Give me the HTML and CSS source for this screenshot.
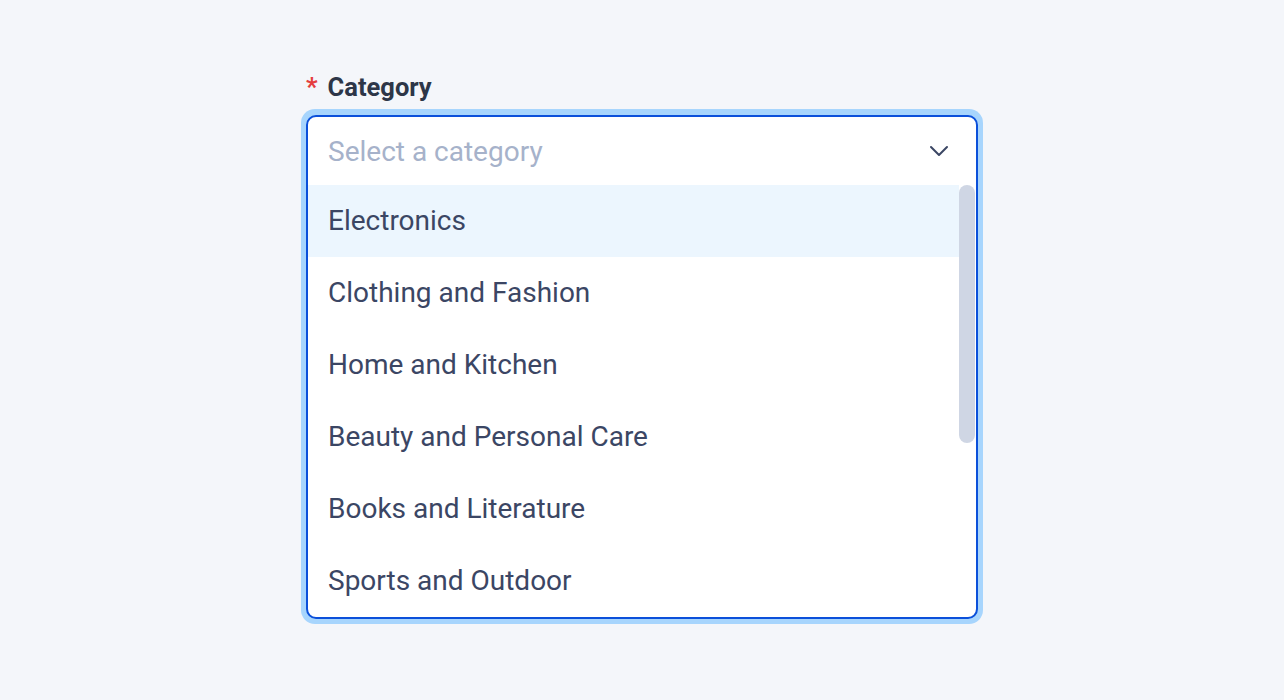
FILE: index.html
```html
<!DOCTYPE html>
<html>
<head>
<meta charset="utf-8">
<link rel="stylesheet" href="styles.css">
</head>
<body>
<div class="page">
  <div class="field">
    <label class="label"><span class="req">*</span>Category</label>
    <div class="ring">
      <div class="select">
        <div class="control">
          <span class="placeholder">Select a category</span>
          <svg class="chev" width="20" height="12" viewBox="0 0 20 12"><path d="M2 2 L10 10 L18 2" fill="none" stroke="#3b4664" stroke-width="2" stroke-linecap="round" stroke-linejoin="round"/></svg>
        </div>
        <div class="menu">
          <div class="options">
            <div class="option active">Electronics</div>
            <div class="option">Clothing and Fashion</div>
            <div class="option">Home and Kitchen</div>
            <div class="option">Beauty and Personal Care</div>
            <div class="option">Books and Literature</div>
            <div class="option">Sports and Outdoor</div>
          </div>
          <div class="track"><div class="thumb"></div></div>
        </div>
      </div>
    </div>
  </div>
</div>
</body>
</html>
```
FILE: styles.css
```css
html, body {
  margin: 0;
  padding: 0;
  background: #f4f6fa;
  font-family: Roboto, "Liberation Sans", sans-serif;
}
.page {
  display: flex;
  justify-content: center;
  padding-top: 70px;
}
.field {
  width: 682px;
  display: flex;
  flex-direction: column;
}
.label {
  font-size: 25.5px;
  font-weight: 700;
  color: #2d3648;
  height: 34px;
  line-height: 34px;
  margin-bottom: 5px;
  padding-left: 5px;
}
.req {
  color: #e53e3e;
  margin-right: 10px;
  font-weight: 700;
}
.ring {
  padding: 6px 5px 5px;
  background: #a7d5fd;
  border-radius: 14px;
}
.select {
  border: 2px solid #0b50da;
  border-radius: 10px;
  background: #fff;
  overflow: hidden;
}
.control {
  height: 68px;
  display: flex;
  align-items: center;
  justify-content: space-between;
  padding: 0 27px 0 20px;
}
.placeholder {
  font-size: 28px;
  color: #a6b2ca;
}
.chev {
  display: block;
}
.menu {
  display: flex;
}
.options {
  flex: 1;
}
.option {
  height: 72px;
  line-height: 72px;
  padding-left: 20px;
  font-size: 28px;
  color: #3b4664;
}
.option.active {
  background: #ecf6fe;
}
.track {
  width: 16px;
  padding-right: 1px;
}
.thumb {
  height: 258px;
  background: #cfd6e4;
  border-radius: 8px;
}
```
